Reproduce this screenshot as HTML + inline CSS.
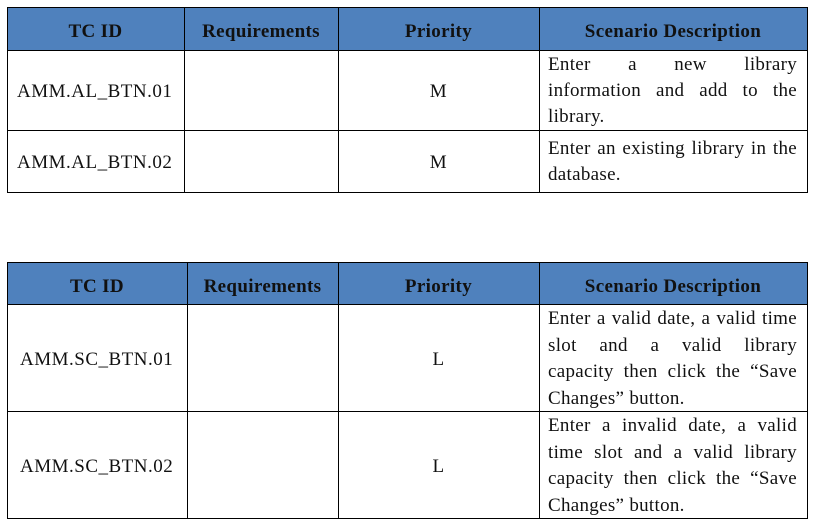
<!DOCTYPE html>
<html><head><style>
body{margin:0;width:817px;height:527px;background:#fff;position:relative;font-family:"Liberation Serif",serif;font-size:19px;letter-spacing:0.5px;color:#111;overflow:hidden}
.h{position:absolute;background:#4f81bd}
.l{position:absolute;background:#000}
.t{position:absolute;white-space:nowrap;line-height:20px;margin-top:1px}
.b{font-weight:bold;letter-spacing:0.35px}
.c{text-align:center}
.j{position:absolute;left:548px;width:249px;text-align:justify;text-align-last:justify;white-space:nowrap;line-height:20px;letter-spacing:0.3px;margin-top:1px}
.n{text-align-last:left}
</style></head><body>
<!-- table 1 -->
<div class="h" style="left:7px;top:7px;width:800px;height:43px"></div>
<div class="l" style="left:7px;top:7px;width:801px;height:1px"></div>
<div class="l" style="left:7px;top:50px;width:801px;height:1px"></div>
<div class="l" style="left:7px;top:130px;width:801px;height:1px"></div>
<div class="l" style="left:7px;top:192px;width:801px;height:1px"></div>
<div class="l" style="left:7px;top:7px;width:1px;height:186px"></div>
<div class="l" style="left:184px;top:7px;width:1px;height:186px"></div>
<div class="l" style="left:338px;top:7px;width:1px;height:186px"></div>
<div class="l" style="left:539px;top:7px;width:1px;height:186px"></div>
<div class="l" style="left:807px;top:7px;width:1px;height:186px"></div>
<div class="t b c" style="left:7px;width:177px;top:21px">TC ID</div>
<div class="t b c" style="left:184px;width:154px;top:21px">Requirements</div>
<div class="t b c" style="left:338px;width:201px;top:21px">Priority</div>
<div class="t b c" style="left:539px;width:268px;top:21px">Scenario Description</div>
<div class="t" style="left:17px;top:81px">AMM.AL_BTN.01</div>
<div class="t c" style="left:338px;width:201px;top:81px">M</div>
<div class="j" style="top:54px">Enter a new library</div>
<div class="j" style="top:80px">information and add to the</div>
<div class="j n" style="top:106px">library.</div>
<div class="t" style="left:17px;top:152px">AMM.AL_BTN.02</div>
<div class="t c" style="left:338px;width:201px;top:152px">M</div>
<div class="j" style="top:138px">Enter an existing library in the</div>
<div class="j n" style="top:164px">database.</div>
<!-- table 2 -->
<div class="h" style="left:7px;top:262px;width:800px;height:42px"></div>
<div class="l" style="left:7px;top:262px;width:801px;height:1px"></div>
<div class="l" style="left:7px;top:304px;width:801px;height:1px"></div>
<div class="l" style="left:7px;top:411px;width:801px;height:1px"></div>
<div class="l" style="left:7px;top:518px;width:801px;height:1px"></div>
<div class="l" style="left:7px;top:262px;width:1px;height:257px"></div>
<div class="l" style="left:187px;top:262px;width:1px;height:257px"></div>
<div class="l" style="left:338px;top:262px;width:1px;height:257px"></div>
<div class="l" style="left:539px;top:262px;width:1px;height:257px"></div>
<div class="l" style="left:807px;top:262px;width:1px;height:257px"></div>
<div class="t b c" style="left:7px;width:180px;top:276px">TC ID</div>
<div class="t b c" style="left:187px;width:151px;top:276px">Requirements</div>
<div class="t b c" style="left:338px;width:201px;top:276px">Priority</div>
<div class="t b c" style="left:539px;width:268px;top:276px">Scenario Description</div>
<div class="t" style="left:20px;top:349px">AMM.SC_BTN.01</div>
<div class="t c" style="left:338px;width:201px;top:349px">L</div>
<div class="j" style="top:308px">Enter a valid date, a valid time</div>
<div class="j" style="top:335px">slot and a valid library</div>
<div class="j" style="top:361px">capacity then click the “Save</div>
<div class="j n" style="top:388px">Changes” button.</div>
<div class="t" style="left:20px;top:456px">AMM.SC_BTN.02</div>
<div class="t c" style="left:338px;width:201px;top:456px">L</div>
<div class="j" style="top:415px">Enter a invalid date, a valid</div>
<div class="j" style="top:442px">time slot and a valid library</div>
<div class="j" style="top:468px">capacity then click the “Save</div>
<div class="j n" style="top:495px">Changes” button.</div>
</body></html>
